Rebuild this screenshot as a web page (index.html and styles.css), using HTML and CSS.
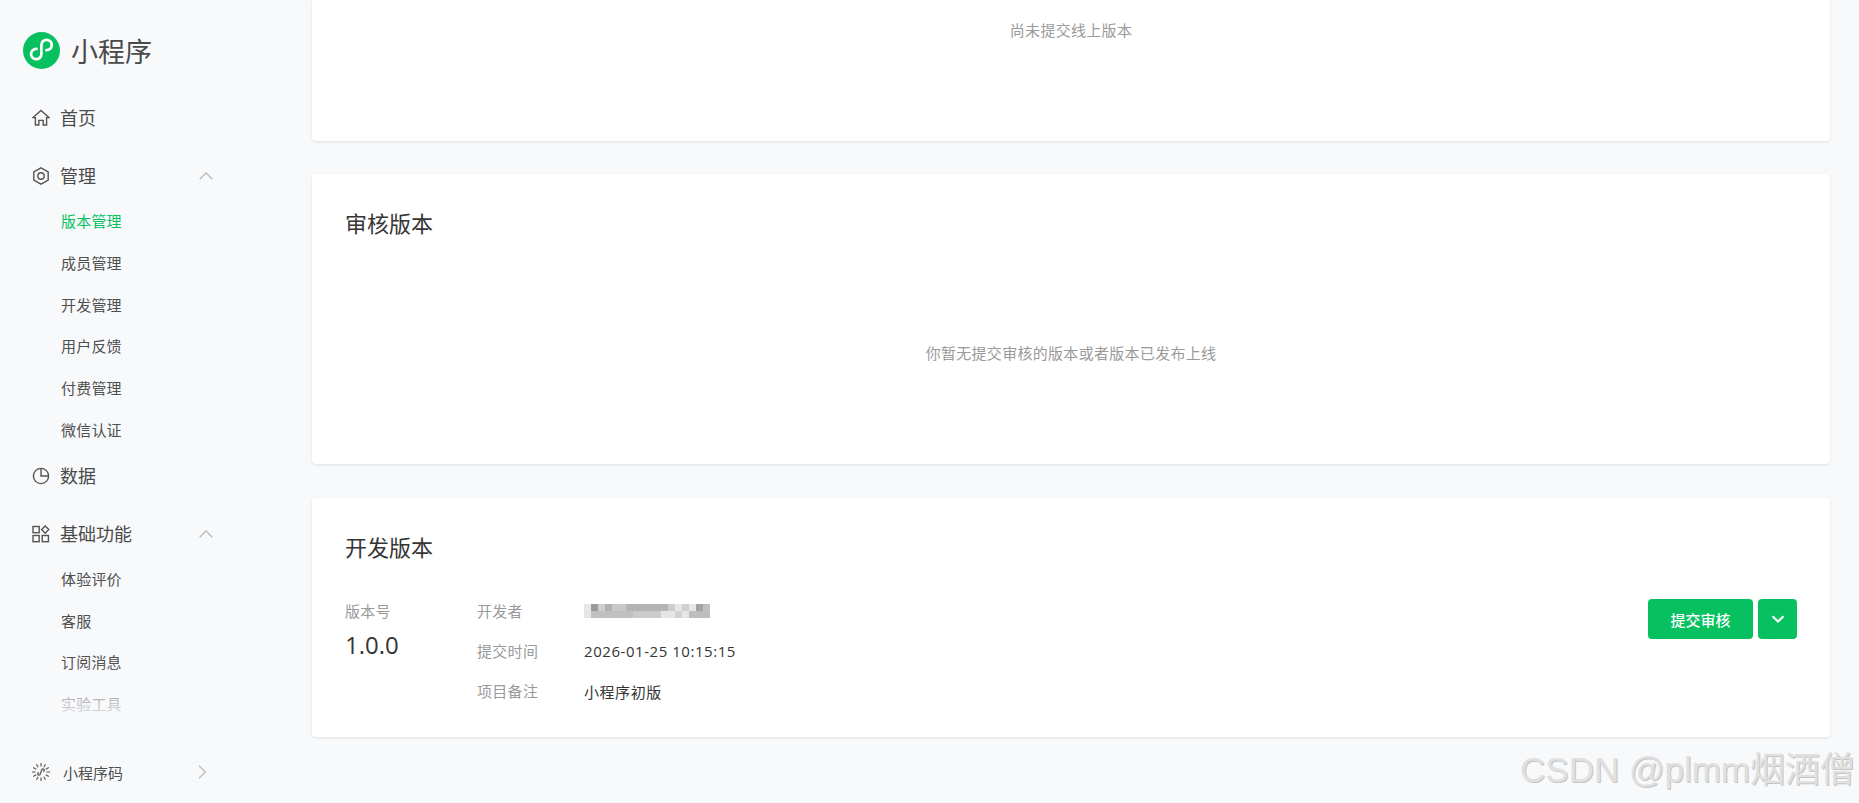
FILE: index.html
```html
<!DOCTYPE html>
<html lang="zh-CN">
<head>
    <meta charset="UTF-8">
    <title>版本管理</title>
    <link rel="stylesheet" href="styles.css">
</head>
<body>
    <div class="page">
        <aside class="sidebar">
            <div class="brand">
                <svg class="brand-logo" viewBox="0 0 37 37">
                    <circle cx="18.5" cy="18.5" r="18.5" fill="#07c160"/>
                    <path d="M13.5 16.8A5.2 5.2 0 1 0 18.4 22V13A5.2 5.2 0 1 1 23.4 18.2" fill="none" stroke="#fff" stroke-width="2.7" stroke-linecap="round"/>
                </svg>
                <span class="brand-name">小程序</span>
            </div>
            <nav class="nav">
                <div class="nav-group">
                    <a class="nav-item">
                        <svg class="nav-icon" viewBox="0 0 18 18"><path d="M1 8.6 9 1.4l8 7.2h-2.4v7.4h-3.4v-4.6H6.8V16H3.4V8.6z"/></svg>
                        <span class="nav-label">首页</span>
                    </a>
                </div>
                <div class="nav-group open">
                    <a class="nav-item">
                        <svg class="nav-icon" viewBox="0 0 18 18"><path d="M9 .8l7.2 4.1v8.2L9 17.2l-7.2-4.1V4.900z"/><circle cx="9" cy="9" r="3.2"/></svg>
                        <span class="nav-label">管理</span>
                        <svg class="nav-arrow" viewBox="0 0 14 8"><path d="M.7 7.3 7 1l6.3 6.3"/></svg>
                    </a>
                    <div class="sub-list">
                        <a class="sub-item active">版本管理</a>
                        <a class="sub-item">成员管理</a>
                        <a class="sub-item">开发管理</a>
                        <a class="sub-item">用户反馈</a>
                        <a class="sub-item">付费管理</a>
                        <a class="sub-item">微信认证</a>
                    </div>
                </div>
                <div class="nav-group">
                    <a class="nav-item">
                        <svg class="nav-icon" viewBox="0 0 18 18"><circle cx="9" cy="9" r="7.6"/><path d="M9 1.400V9h7.600"/></svg>
                        <span class="nav-label">数据</span>
                    </a>
                </div>
                <div class="nav-group open">
                    <a class="nav-item">
                        <svg class="nav-icon" viewBox="0 0 18 18"><rect x="1" y="1.500" width="6.200" height="6.200"/><path d="M13.200 1l3.600 3.600-3.600 3.600-3.600-3.600z"/><rect x="1" y="10.500" width="6.200" height="6.200"/><rect x="10.200" y="10.500" width="6.200" height="6.200"/></svg>
                        <span class="nav-label">基础功能</span>
                        <svg class="nav-arrow" viewBox="0 0 14 8"><path d="M.7 7.3 7 1l6.3 6.3"/></svg>
                    </a>
                    <div class="sub-list">
                        <a class="sub-item">体验评价</a>
                        <a class="sub-item">客服</a>
                        <a class="sub-item">订阅消息</a>
                        <a class="sub-item">实验工具</a>
                    </div>
                </div>
                <div class="nav-fade"></div>
            </nav>
            <div class="qrcode">
                <svg class="nav-icon qrcode-icon" viewBox="0 0 20 20">
                    <path d="M15.500 10H19M14.800 12.800l3 1.700M12.800 14.800l1.700 3M10 15.500V19M7.200 14.800l-1.700 3M5.200 12.800l-3 1.700M4.500 10H1M5.200 7.200l-3-1.700M7.200 5.200l-1.700-3M10 4.500V1M12.800 5.200l1.700-3M14.800 7.200l3-1.700"/>
                    <path class="qrcode-mark" d="M7.800 10.500a1.300 1.300 0 1 0 1.500 1.300l1.400-3.600a1.300 1.300 0 1 1 1.500 1.300"/>
                </svg>
                <span>小程序码</span>
                <svg class="qrcode-arrow" viewBox="0 0 8 14"><path d="M1 .7 7.300 7 1 13.300"/></svg>
            </div>
        </aside>

        <main class="main">
            <section class="card card-online">
                <p class="empty-text">尚未提交线上版本</p>
            </section>

            <section class="card card-review">
                <h2 class="card-title">审核版本</h2>
                <div class="empty-box">
                    <p class="empty-text">你暂无提交审核的版本或者版本已发布上线</p>
                </div>
            </section>

            <section class="card card-dev">
                <h2 class="card-title">开发版本</h2>
                <div class="version">
                    <div class="version-no">
                        <div class="label">版本号</div>
                        <div class="version-num">1.0.0</div>
                    </div>
                    <div class="version-info">
                        <div class="label">开发者</div>
                        <div class="value">
                            <svg class="mosaic" viewBox="0 0 18 2" preserveAspectRatio="none" shape-rendering="crispEdges">
                                <rect x="0" y="0" width="18" height="2" fill="#e6e6e6"/>
                                <rect x="1" y="0" width="1" height="1" fill="#9a9a9a"/>
                                <rect x="2" y="0" width="1" height="1" fill="#cfcfcf"/>
                                <rect x="3" y="0" width="1" height="1" fill="#b0b0b0"/>
                                <rect x="4" y="0" width="2" height="1" fill="#c8c8c8"/>
                                <rect x="6" y="0" width="6" height="1" fill="#b4b4b4"/>
                                <rect x="12" y="0" width="1" height="1" fill="#cdcdcd"/>
                                <rect x="14" y="0" width="1" height="1" fill="#d0d0d0"/>
                                <rect x="16" y="0" width="1" height="1" fill="#a2a2a2"/>
                                <rect x="17" y="0" width="1" height="1" fill="#c0c0c0"/>
                                <rect x="1" y="1" width="6" height="1" fill="#c0c0c0"/>
                                <rect x="7" y="1" width="4" height="1" fill="#cbcbcb"/>
                                <rect x="13" y="1" width="1" height="1" fill="#d2d2d2"/>
                                <rect x="15" y="1" width="3" height="1" fill="#bdbdbd"/>
                            </svg>
                        </div>
                        <div class="label">提交时间</div>
                        <div class="value">2026-01-25 10:15:15</div>
                        <div class="label">项目备注</div>
                        <div class="value">小程序初版</div>
                    </div>
                    <div class="version-actions">
                        <button class="btn">提交审核</button>
                        <button class="btn btn-more">
                            <svg viewBox="0 0 14 8"><path d="M1.500 1.200 7 6.500l5.500-5.300"/></svg>
                        </button>
                    </div>
                </div>
            </section>
        </main>
    </div>
    <div class="watermark">CSDN @plmm烟酒僧</div>
</body>
</html>
```

FILE: styles.css
```css
* {
    box-sizing: border-box;
}
html, body {
    height: 100%;
}
body {
    margin: 0;
    overflow: hidden;
    font-family: "Open Sans", "Noto Sans CJK SC", sans-serif;
    background-color: #f8f9fb;
    color: #353535;
}
p, h2 {
    margin: 0;
}
.page {
    display: flex;
    height: 803px;
}

/* sidebar */
.sidebar {
    width: 280px;
    flex-shrink: 0;
    display: flex;
    flex-direction: column;
}
.brand {
    display: flex;
    align-items: center;
    height: 97px;
    padding: 3px 0 0 23px;
}
.brand-logo {
    width: 37px;
    height: 37px;
}
.brand-name {
    margin-left: 11px;
    font-size: 27px;
    color: #4a4a4a;
}
.nav {
    position: relative;
    height: 615px;
    overflow: hidden;
}
.nav-group {
    margin-bottom: 16px;
}
.nav-group.open {
    margin-bottom: 4px;
}
.nav-item {
    display: flex;
    align-items: center;
    height: 42px;
    padding-left: 32px;
    font-size: 18px;
    color: #4a4a4a;
}
.nav-label {
    position: relative;
    top: -1px;
}
.nav-icon {
    width: 18px;
    height: 18px;
    margin-right: 10px;
    fill: none;
    stroke: #555;
    stroke-width: 1.4;
}
.nav-arrow {
    width: 14px;
    height: 8px;
    margin-left: auto;
    margin-right: 67px;
    fill: none;
    stroke: #bbb;
    stroke-width: 1.4;
}
.sub-list {
    margin-top: 3px;
}
.sub-item {
    display: block;
    height: 41.8px;
    line-height: 42px;
    padding-left: 61px;
    font-size: 15px;
    letter-spacing: 0.2px;
    color: #4f4f4f;
}
.sub-item.active {
    color: #07c160;
}
.nav-fade {
    position: absolute;
    left: 0;
    right: 0;
    bottom: 0;
    height: 50px;
    background: linear-gradient(rgba(248, 249, 251, 0), rgba(248, 249, 251, 0.8));
}
.qrcode {
    display: flex;
    align-items: center;
    height: 42px;
    margin-top: 39px;
    padding-left: 31px;
    font-size: 15px;
    color: #4f4f4f;
}
.qrcode-icon {
    width: 20px;
    height: 20px;
    margin-right: 12px;
    stroke-width: 1.1;
}
.qrcode-mark {
    stroke-width: 1.5;
    stroke: #666;
}
.qrcode-arrow {
    width: 8px;
    height: 14px;
    margin-left: auto;
    margin-right: 74px;
    fill: none;
    stroke: #bbb;
    stroke-width: 1.3;
}

/* main column */
.main {
    flex: 1;
    padding-right: 29px;
    padding-left: 32px;
}
.card {
    background-color: #fff;
    border-radius: 4px;
    box-shadow: 0 1px 3px rgba(0, 0, 0, 0.1);
    margin-bottom: 34px;
    padding: 33px 33px 0;
}
.card-online {
    height: 141px;
    margin-bottom: 33px;
    padding-top: 19px;
    border-radius: 0 0 4px 4px;
}
.card-review {
    height: 290px;
}
.card-dev {
    height: 239px;
}
.card-title {
    font-size: 22px;
    font-weight: 400;
    line-height: 32px;
    color: #353535;
}
.empty-box {
    display: flex;
    align-items: center;
    justify-content: center;
    height: 228px;
}
.empty-text {
    font-size: 15px;
    letter-spacing: 0.3px;
    line-height: 22px;
    text-align: center;
    color: #9a9a9a;
}

/* dev version row */
.version {
    display: flex;
    margin-top: 28px;
}
.version-no {
    width: 132px;
}
.label {
    font-size: 15px;
    letter-spacing: 0.3px;
    line-height: 40px;
    color: #9a9a9a;
}
.version-num {
    font-size: 24px;
    line-height: 30px;
    margin-top: -1px;
    color: #353535;
}
.version-info {
    display: grid;
    grid-template-columns: 107px auto;
    grid-auto-rows: 40px;
}
.value {
    display: flex;
    align-items: center;
    font-size: 15px;
    letter-spacing: 0.55px;
    color: #353535;
}
.mosaic {
    width: 126px;
    height: 14px;
}
.version-actions {
    display: flex;
    gap: 5px;
    margin-left: auto;
}
.btn {
    width: 105px;
    height: 40px;
    margin-top: 8px;
    padding: 0;
    border: 0;
    border-radius: 4px;
    background-color: #07c160;
    color: #fff;
    font-family: inherit;
    font-size: 15px;
    font-weight: 500;
}
.btn-more {
    display: flex;
    align-items: center;
    justify-content: center;
    width: 39px;
}
.btn-more svg {
    width: 14px;
    height: 8px;
    fill: none;
    stroke: #fff;
    stroke-width: 2;
}

.watermark {
    position: absolute;
    right: 4px;
    top: 748px;
    font-family: "Liberation Sans", "Noto Sans CJK SC", sans-serif;
    font-size: 35px;
    line-height: 44px;
    white-space: nowrap;
    color: #e0e0e0;
    text-shadow: 1px 1px 0 #c4c4c4;
}
```
